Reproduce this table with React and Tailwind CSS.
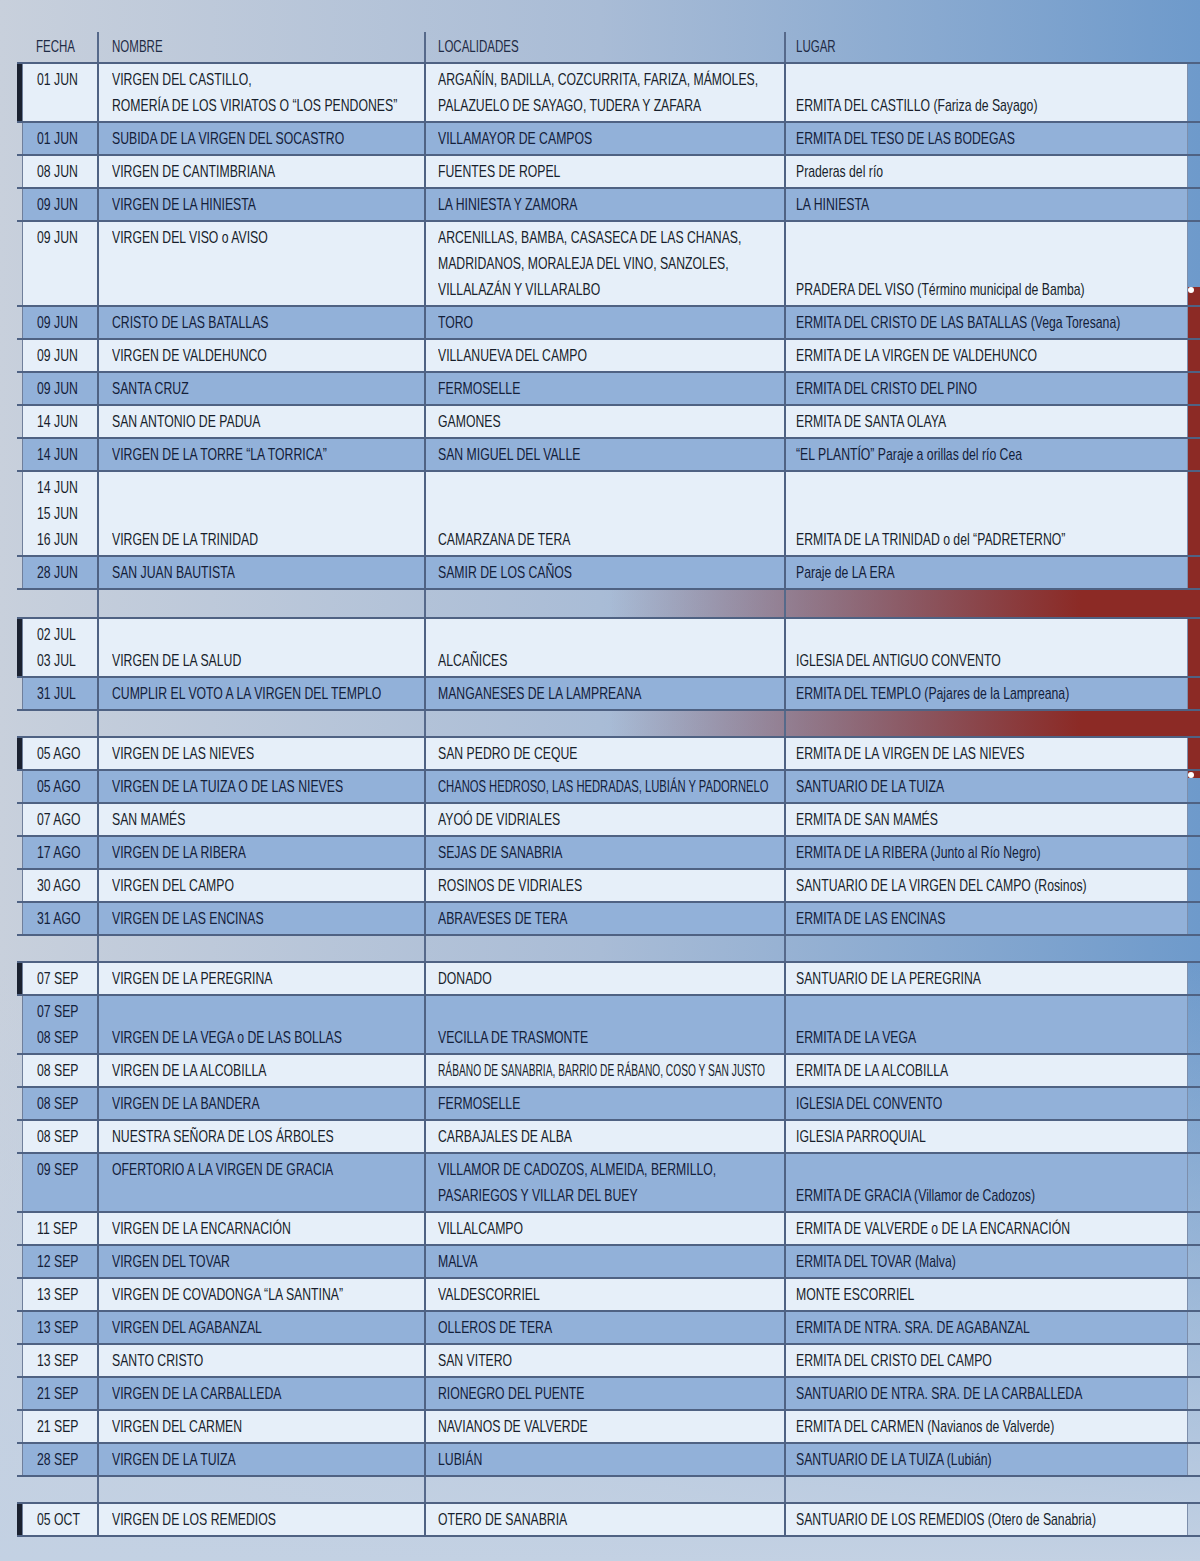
import React from 'react';

const groups = [
  [
    { d: ['01 JUN'], n: ['VIRGEN DEL CASTILLO,', 'ROMERÍA DE LOS VIRIATOS O “LOS PENDONES”'], l: ['ARGAÑÍN, BADILLA, COZCURRITA, FARIZA, MÁMOLES,', 'PALAZUELO DE SAYAGO, TUDERA Y ZAFARA'], p: 'ERMITA DEL CASTILLO (Fariza de Sayago)' },
    { d: ['01 JUN'], n: ['SUBIDA DE LA VIRGEN DEL SOCASTRO'], l: ['VILLAMAYOR DE CAMPOS'], p: 'ERMITA DEL TESO DE LAS BODEGAS' },
    { d: ['08 JUN'], n: ['VIRGEN DE CANTIMBRIANA'], l: ['FUENTES DE ROPEL'], p: 'Praderas del río' },
    { d: ['09 JUN'], n: ['VIRGEN DE LA HINIESTA'], l: ['LA HINIESTA Y ZAMORA'], p: 'LA HINIESTA' },
    { d: ['09 JUN'], n: ['VIRGEN DEL VISO o AVISO'], l: ['ARCENILLAS, BAMBA, CASASECA DE LAS CHANAS,', 'MADRIDANOS, MORALEJA DEL VINO, SANZOLES,', 'VILLALAZÁN Y VILLARALBO'], p: 'PRADERA DEL VISO (Término municipal de Bamba)' },
    { d: ['09 JUN'], n: ['CRISTO DE LAS BATALLAS'], l: ['TORO'], p: 'ERMITA DEL CRISTO DE LAS BATALLAS (Vega Toresana)' },
    { d: ['09 JUN'], n: ['VIRGEN DE VALDEHUNCO'], l: ['VILLANUEVA DEL CAMPO'], p: 'ERMITA DE LA VIRGEN DE VALDEHUNCO' },
    { d: ['09 JUN'], n: ['SANTA CRUZ'], l: ['FERMOSELLE'], p: 'ERMITA DEL CRISTO DEL PINO' },
    { d: ['14 JUN'], n: ['SAN ANTONIO DE PADUA'], l: ['GAMONES'], p: 'ERMITA DE SANTA OLAYA' },
    { d: ['14 JUN'], n: ['VIRGEN DE LA TORRE “LA TORRICA”'], l: ['SAN MIGUEL DEL VALLE'], p: '“EL PLANTÍO” Paraje a orillas del río Cea' },
    { d: ['14 JUN', '15 JUN', '16 JUN'], n: ['VIRGEN DE LA TRINIDAD'], l: ['CAMARZANA DE TERA'], p: 'ERMITA DE LA TRINIDAD o del “PADRETERNO”' },
    { d: ['28 JUN'], n: ['SAN JUAN BAUTISTA'], l: ['SAMIR DE LOS CAÑOS'], p: 'Paraje de LA ERA' },
  ],
  [
    { d: ['02 JUL', '03 JUL'], n: ['VIRGEN DE LA SALUD'], l: ['ALCAÑICES'], p: 'IGLESIA DEL ANTIGUO CONVENTO' },
    { d: ['31 JUL'], n: ['CUMPLIR EL VOTO A LA VIRGEN DEL TEMPLO'], l: ['MANGANESES DE LA LAMPREANA'], p: 'ERMITA DEL TEMPLO (Pajares de la Lampreana)' },
  ],
  [
    { d: ['05 AGO'], n: ['VIRGEN DE LAS NIEVES'], l: ['SAN PEDRO DE CEQUE'], p: 'ERMITA DE LA VIRGEN DE LAS NIEVES' },
    { d: ['05 AGO'], n: ['VIRGEN DE LA TUIZA O DE LAS NIEVES'], l: ['CHANOS HEDROSO, LAS HEDRADAS, LUBIÁN Y PADORNELO'], p: 'SANTUARIO DE LA TUIZA', squeeze: 'scale-x-[0.66]' },
    { d: ['07 AGO'], n: ['SAN MAMÉS'], l: ['AYOÓ DE VIDRIALES'], p: 'ERMITA DE SAN MAMÉS' },
    { d: ['17 AGO'], n: ['VIRGEN DE LA RIBERA'], l: ['SEJAS DE SANABRIA'], p: 'ERMITA DE LA RIBERA (Junto al Río Negro)' },
    { d: ['30 AGO'], n: ['VIRGEN DEL CAMPO'], l: ['ROSINOS DE VIDRIALES'], p: 'SANTUARIO DE LA VIRGEN DEL CAMPO (Rosinos)' },
    { d: ['31 AGO'], n: ['VIRGEN DE LAS ENCINAS'], l: ['ABRAVESES DE TERA'], p: 'ERMITA DE LAS ENCINAS' },
  ],
  [
    { d: ['07 SEP'], n: ['VIRGEN DE LA PEREGRINA'], l: ['DONADO'], p: 'SANTUARIO DE LA PEREGRINA' },
    { d: ['07 SEP', '08 SEP'], n: ['VIRGEN DE LA VEGA o DE LAS BOLLAS'], l: ['VECILLA DE TRASMONTE'], p: 'ERMITA DE LA VEGA' },
    { d: ['08 SEP'], n: ['VIRGEN DE LA ALCOBILLA'], l: ['RÁBANO DE SANABRIA, BARRIO DE RÁBANO, COSO Y SAN JUSTO'], p: 'ERMITA DE LA ALCOBILLA', squeeze: 'scale-x-[0.6]' },
    { d: ['08 SEP'], n: ['VIRGEN DE LA BANDERA'], l: ['FERMOSELLE'], p: 'IGLESIA DEL CONVENTO' },
    { d: ['08 SEP'], n: ['NUESTRA SEÑORA DE LOS ÁRBOLES'], l: ['CARBAJALES DE ALBA'], p: 'IGLESIA PARROQUIAL' },
    { d: ['09 SEP'], n: ['OFERTORIO A LA VIRGEN DE GRACIA'], l: ['VILLAMOR DE CADOZOS, ALMEIDA, BERMILLO,', 'PASARIEGOS Y VILLAR DEL BUEY'], p: 'ERMITA DE GRACIA (Villamor de Cadozos)' },
    { d: ['11 SEP'], n: ['VIRGEN DE LA ENCARNACIÓN'], l: ['VILLALCAMPO'], p: 'ERMITA DE VALVERDE o DE LA ENCARNACIÓN' },
    { d: ['12 SEP'], n: ['VIRGEN DEL TOVAR'], l: ['MALVA'], p: 'ERMITA DEL TOVAR (Malva)' },
    { d: ['13 SEP'], n: ['VIRGEN DE COVADONGA “LA SANTINA”'], l: ['VALDESCORRIEL'], p: 'MONTE ESCORRIEL' },
    { d: ['13 SEP'], n: ['VIRGEN DEL AGABANZAL'], l: ['OLLEROS DE TERA'], p: 'ERMITA DE NTRA. SRA. DE AGABANZAL' },
    { d: ['13 SEP'], n: ['SANTO CRISTO'], l: ['SAN VITERO'], p: 'ERMITA DEL CRISTO DEL CAMPO' },
    { d: ['21 SEP'], n: ['VIRGEN DE LA CARBALLEDA'], l: ['RIONEGRO DEL PUENTE'], p: 'SANTUARIO DE NTRA. SRA. DE LA CARBALLEDA' },
    { d: ['21 SEP'], n: ['VIRGEN DEL CARMEN'], l: ['NAVIANOS DE VALVERDE'], p: 'ERMITA DEL CARMEN (Navianos de Valverde)' },
    { d: ['28 SEP'], n: ['VIRGEN DE LA TUIZA'], l: ['LUBIÁN'], p: 'SANTUARIO DE LA TUIZA (Lubián)' },
  ],
  [
    { d: ['05 OCT'], n: ['VIRGEN DE LOS REMEDIOS'], l: ['OTERO DE SANABRIA'], p: 'SANTUARIO DE LOS REMEDIOS (Otero de Sanabria)' },
  ],
];

const cols = 'grid grid-cols-[5px_75px_327px_360px_404px]';

// condensed look: Liberation Sans squeezed horizontally
const Lines = ({ lines, bottom, squeeze = 'scale-x-[0.72]', className = '' }) => (
  <div className={`flex flex-col pt-[3px] pb-[2px] overflow-hidden ${bottom ? 'justify-end' : 'justify-start'} ${className}`}>
    {lines.map((t, i) => (
      <div key={i} className="h-[26px] leading-[26px] whitespace-nowrap">
        <span className={`inline-block origin-left ${squeeze}`}>{t}</span>
      </div>
    ))}
  </div>
);

const Row = ({ row, blue, first }) => {
  const multiDate = row.d.length > 1;
  const bg = blue ? 'bg-[#92b1d9] text-[#132039]' : 'bg-[#e6eff9] text-[#171e2b]';
  return (
    <div className={`${cols} border-b-2 border-[#4f6283] ${first ? 'border-t-2' : ''}`}>
      <div className={first ? 'bg-[#1a2130]' : ''} />
      <Lines lines={row.d} className={`${bg} pl-[14px] border-l border-[#6f7f9b]`} />
      <Lines lines={row.n} bottom={multiDate} className={`${bg} pl-[13px] border-l-2 border-[#4f6283]`} />
      <Lines lines={row.l} bottom={multiDate} squeeze={row.squeeze} className={`${bg} pl-[12px] border-l-2 border-[#4f6283]`} />
      <Lines lines={[row.p]} bottom className={`${bg} pl-[10px] border-l-2 border-[#4f6283] border-r border-r-[#7d8eab]`} />
    </div>
  );
};

const Spacer = ({ red, tall }) => (
  <div className={`${cols} ${tall ? 'h-[27px]' : 'h-[25px]'} ${red ? 'bg-gradient-to-r from-transparent from-50% to-[#8c2a25] to-90%' : ''}`}>
    <div />
    <div />
    <div className="border-l-2 border-[#56698a]" />
    <div className="border-l-2 border-[#56698a]" />
    <div className="border-l-2 border-[#56698a]" />
  </div>
);

export default function App() {
  return (
    <div
      className="relative w-full min-h-[1561px] overflow-hidden bg-gradient-to-r from-[#c8d0dc] via-[#a9bcd6] to-[#6e9acb] text-[17px]"
      style={{ fontFamily: '"Liberation Sans", Arial, sans-serif' }}
    >
      {/* background: red ribbon on the right and light clouds at the bottom */}
      <div className="absolute right-0 top-[287px] h-[491px] w-[13px] bg-[#8c2a25]" />
      <div className="absolute right-[6px] top-[287px] h-[6px] w-[6px] rounded-full bg-white" />
      <div className="absolute right-[6px] top-[772px] h-[6px] w-[6px] rounded-full bg-white" />
      <div className="absolute inset-x-0 bottom-0 h-[600px] bg-gradient-to-t from-[#c3d1e3] to-transparent" />

      <div className="relative pl-[17px] pt-[32px]">
        <div className={`${cols} h-[30px] text-[16px] text-[#1f2b45]`}>
          <div />
          {['FECHA', 'NOMBRE', 'LOCALIDADES', 'LUGAR'].map((h, i) => (
            <div
              key={h}
              className={`pt-[3px] whitespace-nowrap ${i === 0 ? 'pl-[14px]' : 'border-l-2 border-[#56698a]'} ${i === 1 ? 'pl-[13px]' : ''} ${i === 2 ? 'pl-[12px]' : ''} ${i === 3 ? 'pl-[10px]' : ''}`}
            >
              <span className="inline-block origin-left scale-x-[0.72]">{h}</span>
            </div>
          ))}
        </div>
        {groups.map((g, gi) => (
          <React.Fragment key={gi}>
            {gi > 0 && <Spacer red={gi < 3} tall={gi === 1} />}
            {g.map((row, ri) => (
              <Row key={ri} row={row} blue={ri % 2 === 1} first={ri === 0} />
            ))}
          </React.Fragment>
        ))}
      </div>
    </div>
  );
}
